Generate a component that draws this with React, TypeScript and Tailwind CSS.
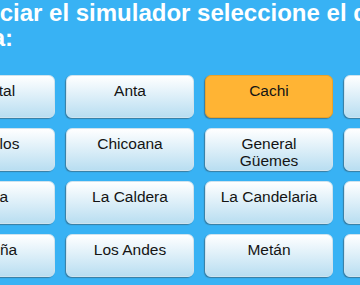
import React from "react";

const departamentos: string[] = [
  "Capital",
  "Anta",
  "Cachi",
  "Cafayate",
  "Cerrillos",
  "Chicoana",
  "General Güemes",
  "Guachipas",
  "Iruya",
  "La Caldera",
  "La Candelaria",
  "La Poma",
  "La Viña",
  "Los Andes",
  "Metán",
  "Molinos",
];

const App = () => {
  const selected = "Cachi";

  return (
    <div className="w-[360px] h-[285px] overflow-hidden bg-[#38b2f4] font-['Liberation_Sans',Arial,sans-serif]">
      <div className="-ml-[87px] w-[620px]">
        <h1 className="text-[24px] leading-[25px] font-bold text-white">
          Para iniciar el simulador seleccione el departamento de Salta:
        </h1>
        <div className="ml-[14px] mt-[25px] grid grid-cols-[repeat(4,128px)] gap-x-[11px] gap-y-[10px]">
          {departamentos.map((d) => (
            <button
              key={d}
              className={
                d === selected
                  ? "h-[43px] rounded-[6px] border border-[#e9a22a] bg-[#ffb434] px-[10px] pt-[6px] text-center text-[15.5px] leading-[17px] text-[#141414] shadow-[-1px_1px_1px_rgba(60,60,60,0.45)] flex flex-col items-center justify-start"
                  : "h-[43px] rounded-[6px] border border-[#cfe3ee] bg-gradient-to-b from-white to-[#b9def1] px-[10px] pt-[6px] text-center text-[15.5px] leading-[17px] text-[#141414] shadow-[-1px_1px_1px_rgba(60,60,60,0.45)] flex flex-col items-center justify-start"
              }
            >
              {d}
            </button>
          ))}
        </div>
      </div>
    </div>
  );
};

export default App;
